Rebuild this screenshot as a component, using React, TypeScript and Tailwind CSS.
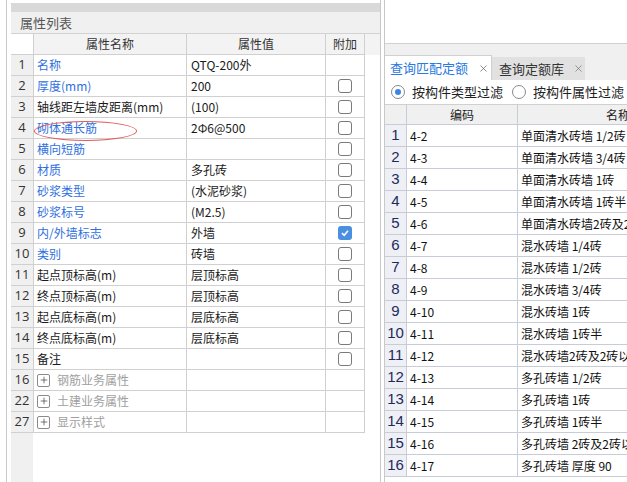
import { Plus, X } from 'lucide-react';

type PropRow = {
  no: number;
  name: string;
  value?: string;
  tone: 'blue' | 'black' | 'group';
  check?: 'none' | 'off' | 'on';
};

const props: PropRow[] = [
  { no: 1, name: '名称', value: 'QTQ-200外', tone: 'blue', check: 'none' },
  { no: 2, name: '厚度(mm)', value: '200', tone: 'blue', check: 'off' },
  { no: 3, name: '轴线距左墙皮距离(mm)', value: '(100)', tone: 'black', check: 'off' },
  { no: 4, name: '砌体通长筋', value: '2Φ6@500', tone: 'blue', check: 'off' },
  { no: 5, name: '横向短筋', value: '', tone: 'blue', check: 'off' },
  { no: 6, name: '材质', value: '多孔砖', tone: 'blue', check: 'off' },
  { no: 7, name: '砂浆类型', value: '(水泥砂浆)', tone: 'blue', check: 'off' },
  { no: 8, name: '砂浆标号', value: '(M2.5)', tone: 'blue', check: 'off' },
  { no: 9, name: '内/外墙标志', value: '外墙', tone: 'blue', check: 'on' },
  { no: 10, name: '类别', value: '砖墙', tone: 'blue', check: 'off' },
  { no: 11, name: '起点顶标高(m)', value: '层顶标高', tone: 'black', check: 'off' },
  { no: 12, name: '终点顶标高(m)', value: '层顶标高', tone: 'black', check: 'off' },
  { no: 13, name: '起点底标高(m)', value: '层底标高', tone: 'black', check: 'off' },
  { no: 14, name: '终点底标高(m)', value: '层底标高', tone: 'black', check: 'off' },
  { no: 15, name: '备注', value: '', tone: 'black', check: 'off' },
  { no: 16, name: '钢筋业务属性', tone: 'group', check: 'none' },
  { no: 22, name: '土建业务属性', tone: 'group', check: 'none' },
  { no: 27, name: '显示样式', tone: 'group', check: 'none' },
];

const quotas = [
  ['4-2', '单面清水砖墙 1/2砖'],
  ['4-3', '单面清水砖墙 3/4砖'],
  ['4-4', '单面清水砖墙 1砖'],
  ['4-5', '单面清水砖墙 1砖半'],
  ['4-6', '单面清水砖墙2砖及2砖以上'],
  ['4-7', '混水砖墙 1/4砖'],
  ['4-8', '混水砖墙 1/2砖'],
  ['4-9', '混水砖墙 3/4砖'],
  ['4-10', '混水砖墙 1砖'],
  ['4-11', '混水砖墙 1砖半'],
  ['4-12', '混水砖墙2砖及2砖以上'],
  ['4-13', '多孔砖墙 1/2砖'],
  ['4-14', '多孔砖墙 1砖'],
  ['4-15', '多孔砖墙 1砖半'],
  ['4-16', '多孔砖墙 2砖及2砖以上'],
  ['4-17', '多孔砖墙 厚度 90'],
];

function Check({ state }: { state?: 'none' | 'off' | 'on' }) {
  if (!state || state === 'none') return null;
  if (state === 'on')
    return (
      <span className="flex h-[14px] w-[14px] items-center justify-center rounded-[3px] bg-[#4a8fe0]">
        <svg width="10" height="10" viewBox="0 0 10 10">
          <polyline points="2,5.2 4.2,7.3 8,2.8" fill="none" stroke="white" strokeWidth="1.6" />
        </svg>
      </span>
    );
  return <span className="h-[14px] w-[14px] rounded-[3px] border border-[#7a7a7a] bg-white" />;
}

function PropertyPanel() {
  return (
    <div className="flex w-[370px] shrink-0 flex-col border-r border-[#c9c9c9] font-['Noto_Sans_CJK_SC',sans-serif] text-[12px]">
      <div className="h-[3px] shrink-0 bg-white" />
      <div className="h-[9px] shrink-0 bg-[#d9d9d9]" />
      {/* title */}
      <div className="flex h-[22px] shrink-0 items-center border-b border-[#d2d2d2] bg-[#f0f0f0] pl-[9px] text-[13px] text-[#555]">
        属性列表
      </div>

      {/* header */}
      <div className="flex h-[21px] shrink-0 text-[#333]">
        <div className="w-[23px] border-b border-r border-[#d0d0d0] bg-white" />
        <div className="flex w-[153px] items-center justify-center border-b border-r border-[#d0d0d0] bg-[#f3f3f3]">属性名称</div>
        <div className="flex w-[139px] items-center justify-center border-b border-r border-[#d0d0d0] bg-[#f3f3f3]">属性值</div>
        <div className="flex w-[39px] items-center justify-center border-b border-r border-[#d0d0d0] bg-[#f3f3f3]">附加</div>
        <div className="flex-1 bg-[#f3f3f3]" />
      </div>

      {props.map((r) => (
        <div key={r.no} className="flex h-[21px] shrink-0">
          <div className="flex w-[23px] items-center justify-center border-b border-r border-[#d0d0d0] bg-[#f0f0f0] font-['Open_Sans',sans-serif] text-[13px] text-[#333]">
            {r.no}
          </div>
          <div
            className={`relative flex w-[153px] items-center border-b border-r border-[#d0d0d0] pl-[3px] ${
              r.tone === 'blue' ? 'text-[#2f6fe0]' : r.tone === 'group' ? 'text-[#a0a0a0]' : 'text-[#1a1a1a]'
            }`}
          >
            {r.tone === 'group' && (
              <span className="mr-[7px] flex h-[13px] w-[13px] items-center justify-center rounded-[2px] border border-[#8a8a8a] text-[#333]">
                <Plus size={10} strokeWidth={1.6} />
              </span>
            )}
            <span className="whitespace-nowrap">{r.name}</span>
            {r.no === 4 && (
              <span className="absolute left-[0px] top-[3px] h-[20px] w-[103px] rounded-[50%] border border-[#e05a5a]" />
            )}
          </div>
          <div className="flex w-[139px] items-center whitespace-nowrap border-b border-r border-[#d0d0d0] pl-[4px] text-[#1a1a1a]">
            {r.value}
          </div>
          <div className="flex w-[39px] items-center justify-center border-b border-r border-[#d0d0d0]">
            <Check state={r.check} />
          </div>
          <div className="flex-1" />
        </div>
      ))}

      <div className="flex flex-1">
        <div className="w-[22px] bg-[#f0f0f0]" />
        <div className="flex-1 bg-white" />
      </div>
    </div>
  );
}

function QuotaPanel() {
  return (
    <div className="flex min-w-0 flex-1 flex-col overflow-hidden border-l border-[#c9c9c9] font-['Noto_Sans_CJK_SC',sans-serif] text-[12px]">
      <div className="h-[43px] shrink-0 bg-white" />
      {/* tabs */}
      <div className="flex h-[37px] shrink-0 items-end border-t border-[#d0d0d0] bg-[#f0f0f0]">
        <div className="flex h-[25px] w-[107px] shrink-0 items-center border-r border-t border-[#d0d0d0] bg-white pl-[5px] text-[13px] text-[#2a78e0]">
          <span>查询匹配定额</span>
          <X size={11} strokeWidth={1.6} className="ml-[10px] text-[#666]" />
        </div>
        <div className="flex h-[23px] w-[93px] shrink-0 items-center bg-[#e1e1e1] pl-[7px] text-[13px] text-[#333]">
          <span>查询定额库</span>
          <X size={11} strokeWidth={1.6} className="ml-[9px] text-[#777]" />
        </div>
      </div>

      {/* filter */}
      <div className="flex h-[25px] shrink-0 items-center whitespace-nowrap border-b border-[#d0d0d0] bg-white pl-[6px] text-[13px] text-[#222]">
        <span className="flex h-[14px] w-[14px] shrink-0 items-center justify-center rounded-full border border-[#8a8a8a]">
          <span className="h-[6px] w-[6px] rounded-full bg-[#3b86e3]" />
        </span>
        <span className="ml-[7px]">按构件类型过滤</span>
        <span className="ml-[9px] h-[14px] w-[14px] shrink-0 rounded-full border border-[#8a8a8a]" />
        <span className="ml-[7px]">按构件属性过滤</span>
      </div>

      {/* header */}
      <div className="flex h-[20px] shrink-0 text-[#222]">
        <div className="w-[22px] shrink-0 border-b border-r border-[#c8ccd6] bg-[#f0f0f0]" />
        <div className="flex w-[111px] shrink-0 items-center justify-center border-b border-r border-[#c8ccd6] bg-[#f0f0f0]">编码</div>
        <div className="flex w-[200px] shrink-0 items-center justify-center border-b border-[#c8ccd6] bg-[#f0f0f0]">名称</div>
      </div>

      {quotas.map(([code, name], i) => (
        <div key={code} className="flex h-[22px] shrink-0">
          <div className="flex w-[22px] shrink-0 items-center justify-center border-b border-r border-[#c8ccd6] bg-[#eef0f5] font-['Liberation_Sans',sans-serif] text-[15px] text-[#1e2a5c]">
            {i + 1}
          </div>
          <div className="flex w-[111px] shrink-0 items-center border-b border-r border-[#c8ccd6] pl-[3px] text-[#111]">{code}</div>
          <div className="flex w-[200px] shrink-0 items-center whitespace-nowrap border-b border-[#c8ccd6] pl-[3px] text-[#111]">
            {name}
          </div>
        </div>
      ))}
    </div>
  );
}

export default function App() {
  return (
    <div className="flex h-[482px] w-[627px] overflow-hidden bg-white">
      <div className="w-[6px] shrink-0" />
      <div className="w-[1px] shrink-0 bg-[#c9c9c9]" />
      <div className="w-[4px] shrink-0" />
      <PropertyPanel />
      <div className="w-[3px] shrink-0" />
      <QuotaPanel />
    </div>
  );
}
